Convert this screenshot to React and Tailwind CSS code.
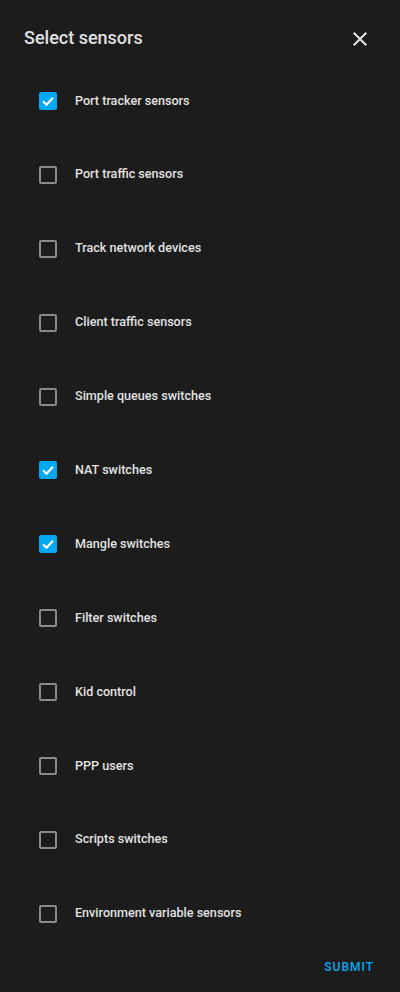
import React from "react";

const items = [
  ["Port tracker sensors", true],
  ["Port traffic sensors", false],
  ["Track network devices", false],
  ["Client traffic sensors", false],
  ["Simple queues switches", false],
  ["NAT switches", true],
  ["Mangle switches", true],
  ["Filter switches", false],
  ["Kid control", false],
  ["PPP users", false],
  ["Scripts switches", false],
  ["Environment variable sensors", false],
];

export default function App() {
  return (
    <div className="w-[400px] h-[992px] bg-[#1c1c1c] flex flex-col" style={{ fontFamily: "Roboto, 'Liberation Sans', sans-serif" }}>
      <div className="h-[64px] flex items-start pt-[26px] pl-[24px] pr-[28px] justify-between">
        <div className="text-[18px] font-medium text-[#e1e1e1] leading-[24px]">Select sensors</div>
        <svg width="24" height="24" viewBox="0 0 24 24" className="mt-[1px]">
          <path d="M19 6.41 17.59 5 12 10.59 6.41 5 5 6.41 10.59 12 5 17.59 6.41 19 12 13.41 17.59 19 19 17.59 13.41 12z" fill="#e1e1e1" />
        </svg>
      </div>
      <div className="flex flex-col">
        {items.map(([label, checked]) => (
          <div key={label} className="h-[73.9px] flex items-center pl-[39px]">
            {checked ? (
              <div className="w-[18px] h-[18px] rounded-[2px] bg-[#03a9f4] flex items-center justify-center">
                <svg width="14" height="14" viewBox="0 0 24 24">
                  <path d="M3.5 12.5 9.5 18.5 20.5 6.5" stroke="#fff" strokeWidth="3.6" fill="none" />
                </svg>
              </div>
            ) : (
              <div className="w-[18px] h-[18px] rounded-[2px] border-2 border-[#8a8a8a]" />
            )}
            <div className="ml-[18px] text-[12.6px] font-medium text-[#e1e1e1]">{label}</div>
          </div>
        ))}
      </div>
      <div className="flex justify-end pr-[26px] mt-[8px]">
        <div className="text-[12px] font-medium tracking-[1px] text-[#03a9f4] leading-[16px]">SUBMIT</div>
      </div>
    </div>
  );
}
